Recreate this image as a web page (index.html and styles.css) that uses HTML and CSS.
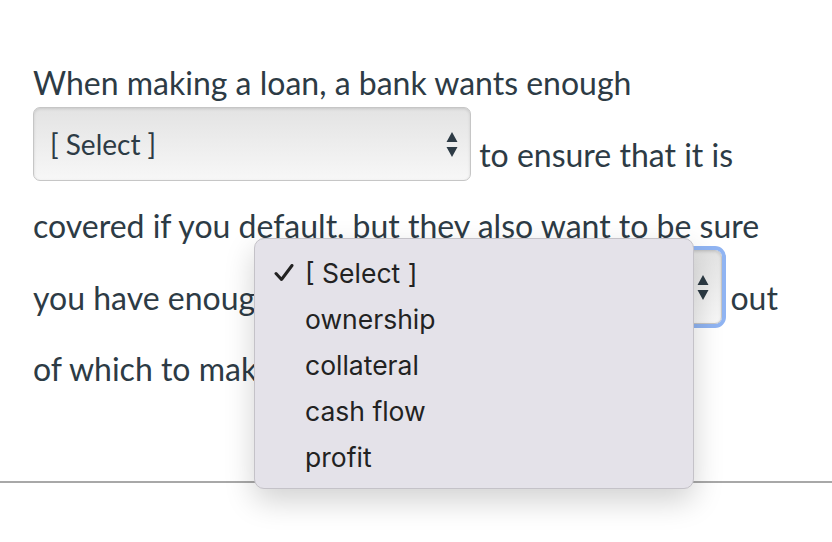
FILE: index.html
```html
<!DOCTYPE html>
<html lang="en">
<head>
  <meta charset="UTF-8">
  <title>Question</title>
  <link rel="stylesheet" href="styles.css">
</head>
<body>

<div class="question">
  <p class="question-text">
    When making a loan, a bank wants enough
    <span class="select-wrap">
      <select class="answer-select">
        <option>[ Select ]</option>
        <option>ownership</option>
        <option>collateral</option>
        <option>cash flow</option>
        <option>profit</option>
      </select>
      <svg class="select-arrows" width="12" height="25" viewBox="0 0 12 25"><path d="M6 0 L11.5 10 L0.5 10 Z M0.5 15 L11.5 15 L6 25 Z" fill="#2d3b45"/></svg>
    </span>
    to ensure that it is covered if you default, but they also want to be sure you have enough
    <span class="select-wrap focused">
      <select class="answer-select">
        <option>[ Select ]</option>
        <option>ownership</option>
        <option>collateral</option>
        <option>cash flow</option>
        <option>profit</option>
      </select>
      <svg class="select-arrows" width="12" height="25" viewBox="0 0 12 25"><path d="M6 0 L11.5 10 L0.5 10 Z M0.5 15 L11.5 15 L6 25 Z" fill="#2d3b45"/></svg>
    </span>
    out of which to make payments.
  </p>
</div>

<hr class="divider">

<!-- открытый список второго селекта -->
<ul class="dropdown-menu">
  <li class="selected">
    <svg class="check" width="20" height="18" viewBox="0 0 20 18"><path d="M2 9.5 L7.5 15.5 L18 1.5" fill="none" stroke="#222" stroke-width="3" stroke-linecap="round" stroke-linejoin="round"/></svg>
    [ Select ]
  </li>
  <li>ownership</li>
  <li>collateral</li>
  <li>cash flow</li>
  <li>profit</li>
</ul>

</body>
</html>
```

FILE: styles.css
```css
body {
  margin: 0;
  padding: 0;
  background: #fff;
  font-family: Lato, 'Liberation Sans', sans-serif;
  color: #2d3b45;
}

.question {
  box-sizing: border-box;
  height: 481px;
  padding: 60px 29px 0 33px;
}

.question-text {
  margin: 0;
  font-size: 32px;
  line-height: 45px;
}

.select-wrap {
  position: relative;
  display: inline-block;
  margin: 2px 0 22px 0;
  vertical-align: 12px;
  line-height: normal;
}

.select-wrap.focused {
  margin-left: 3px;
}

.answer-select {
  -webkit-appearance: none;
  appearance: none;
  display: block;
  width: 438px;
  height: 74px;
  padding: 0 40px 0 16px;
  margin: 0;
  border: 1px solid #c6c6c6;
  border-radius: 7px;
  background: linear-gradient(#e3e3e3, #f7f7f7);
  box-shadow: inset 0 1px 3px rgba(0, 0, 0, 0.12);
  font-family: Lato, 'Liberation Sans', sans-serif;
  font-size: 28px;
  color: #2d3b45;
}

.select-arrows {
  position: absolute;
  right: 13px;
  top: 25px;
}

.focused .answer-select {
  outline: 4px solid #90b4f2;
  outline-offset: 0;
}

.divider {
  margin: 0;
  border: none;
  border-top: 2px solid #a8a8a8;
}

.dropdown-menu {
  position: absolute;
  left: 254px;
  top: 238px;
  width: 440px;
  height: 251px;
  box-sizing: border-box;
  margin: 0;
  padding: 11px 0 0 0;
  list-style: none;
  background: #e4e2e9;
  border: 1px solid #c4c2c8;
  border-radius: 10px;
  box-shadow: 0 12px 30px rgba(0, 0, 0, 0.18);
  font-family: Inter, 'Noto Sans', sans-serif;
  font-size: 26.5px;
  color: #222;
}

.dropdown-menu li {
  height: 46px;
  line-height: 46px;
  padding-left: 50px;
  position: relative;
}

.check {
  position: absolute;
  left: 19px;
  top: 14px;
}
```
